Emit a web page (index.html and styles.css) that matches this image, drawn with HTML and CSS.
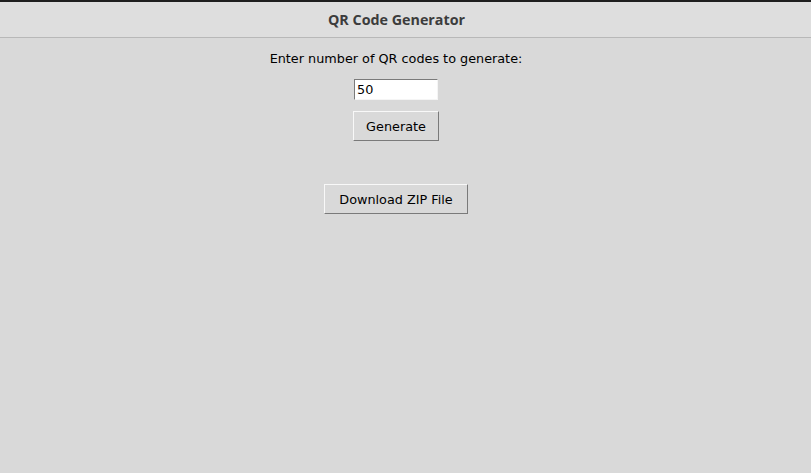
FILE: index.html
```html
<!DOCTYPE html>
<html>
<head>
<meta charset="utf-8">
<link rel="stylesheet" href="styles.css">
</head>
<body>
<div class="window">
  <header class="titlebar">QR Code Generator</header>
  <main class="content">
    <div class="label">Enter number of QR codes to generate:</div>
    <input class="entry" type="text" value="50">
    <button class="btn btn-generate">Generate</button>
    <button class="btn btn-download">Download ZIP File</button>
  </main>
</div>
</body>
</html>
```

FILE: styles.css
```css
html, body {
  margin: 0;
  padding: 0;
  width: 811px;
  height: 473px;
  overflow: hidden;
  background: #d9d9d9;
}
.window {
  display: flex;
  flex-direction: column;
  width: 811px;
  height: 473px;
  border-top: 2px solid #1e1e1e;
  box-sizing: border-box;
}
.titlebar {
  height: 36px;
  box-sizing: border-box;
  background: #dedede;
  border-bottom: 1px solid #b8b8b8;
  display: flex;
  align-items: center;
  justify-content: center;
  padding-right: 18px;
  font-family: "Open Sans", sans-serif;
  font-weight: 700;
  font-size: 14.3px;
  color: #3c3c3c;
  padding-bottom: 1px;
}
.content {
  display: flex;
  flex-direction: column;
  align-items: center;
  padding-right: 19px;
  font-family: "DejaVu Sans", sans-serif;
  font-size: 12.8px;
  color: #000;
  padding-top: 11px;
}
.label {
  height: 19px;
  line-height: 19px;
}
.entry {
  margin-top: 11px;
  width: 84px;
  height: 21px;
  box-sizing: border-box;
  padding: 0 0 0 2px;
  font-family: "DejaVu Sans", sans-serif;
  font-size: 12.8px;
  color: #000;
  background: #fff;
  border: 1px solid;
  border-color: #7a7a7a #f5f5f5 #f5f5f5 #7a7a7a;
  outline: none;
}
.btn {
  box-sizing: border-box;
  height: 30px;
  font-family: "DejaVu Sans", sans-serif;
  font-size: 12.8px;
  color: #000;
  background: #d9d9d9;
  border: 1px solid;
  border-color: #f8f8f8 #7a7a7a #7a7a7a #f8f8f8;
  padding: 0 8px;
  cursor: default;
}
.btn-generate {
  margin-top: 11px;
  width: 86px;
}
.btn-download {
  margin-top: 43px;
  width: 144px;
}
```
